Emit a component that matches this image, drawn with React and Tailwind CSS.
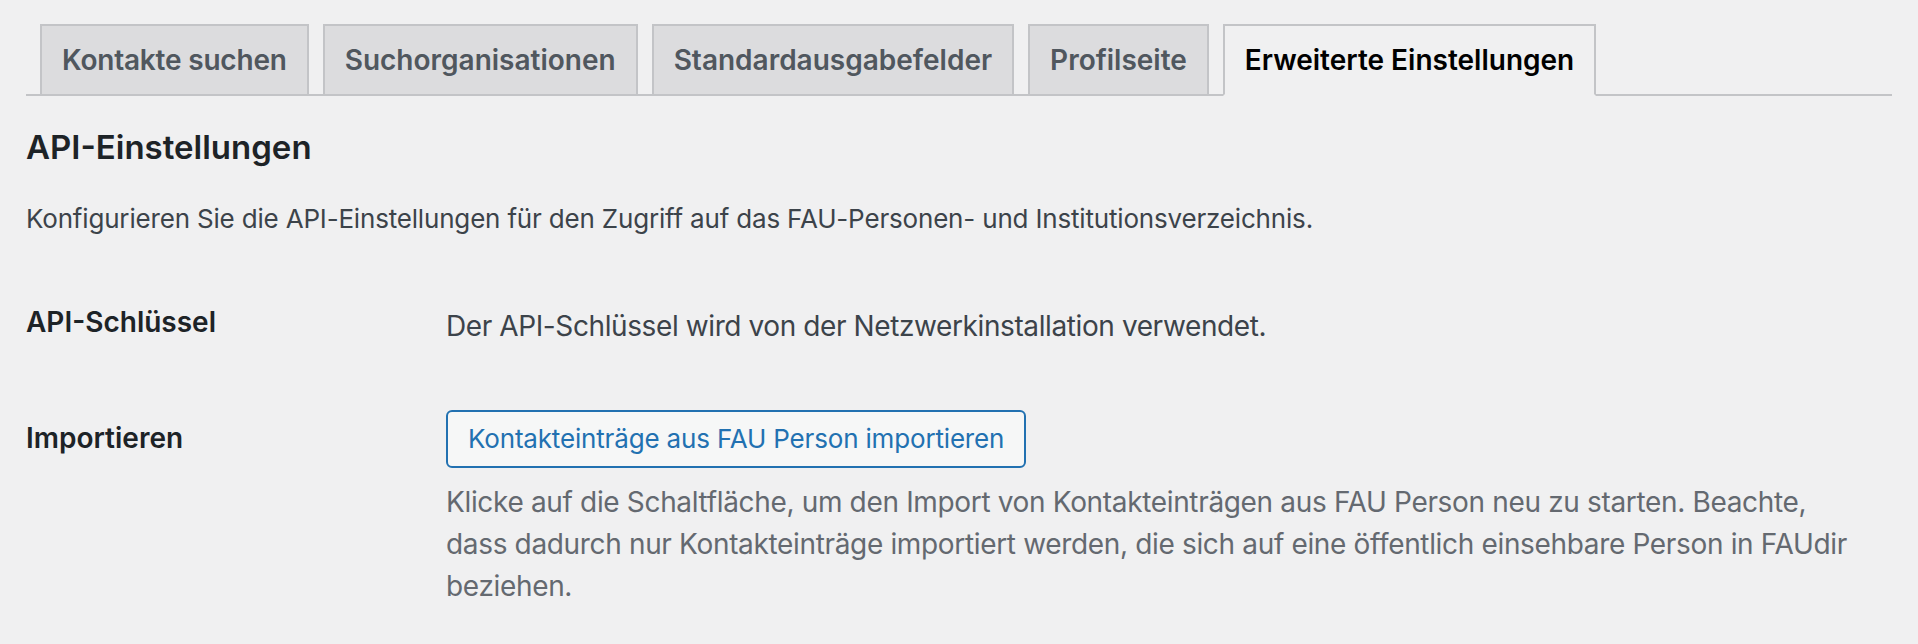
import React from "react";

const tabs = [
  "Kontakte suchen",
  "Suchorganisationen",
  "Standardausgabefelder",
  "Profilseite",
  "Erweiterte Einstellungen",
];

export default function App() {
  return (
    <div
      className="min-h-[644px] w-full bg-[#f0f0f1] pl-[26px] pr-[26px] pt-[24px]"
      style={{ fontFamily: "Inter, 'Noto Sans', sans-serif" }}
    >
      <nav className="flex items-end border-b-2 border-[#c3c4c7]">
        {tabs.map((t, i) => {
          const active = i === tabs.length - 1;
          const first = i === 0;
          return (
            <a
              key={t}
              className={
                "ml-[14px] -mb-[2px] block whitespace-nowrap border-2 px-[20px] py-[10px] text-[28px] font-semibold leading-[48px] " +
                (first ? "tracking-[-0.2px] " : "") +
                (active
                  ? "border-[#c3c4c7] border-b-[#f0f0f1] bg-[#f0f0f1] text-black"
                  : "border-[#c3c4c7] bg-[#dcdcde] text-[#50575e]")
              }
            >
              {t}
            </a>
          );
        })}
      </nav>

      <h2 className="mt-[29px] text-[33px] font-semibold leading-[44px] text-[#1d2327]">
        API-Einstellungen
      </h2>

      <p className="mt-[30px] text-[26px] leading-[39px] tracking-[-0.18px] text-[#3c434a]">
        Konfigurieren Sie die API-Einstellungen für den Zugriff auf das FAU-Personen- und Institutionsverzeichnis.
      </p>

      <div className="mt-[66px] flex">
        <div className="w-[420px] shrink-0 text-[28px] font-semibold leading-[36px] text-[#1d2327]">
          API-Schlüssel
        </div>
        <div className="mt-[1px] text-[28px] leading-[42px] tracking-[-0.4px] text-[#3c434a]">
          Der API-Schlüssel wird von der Netzwerkinstallation verwendet.
        </div>
      </div>

      <div className="mt-[63px] flex">
        <div className="mt-[10px] w-[420px] shrink-0 text-[28px] font-semibold leading-[36px] text-[#1d2327]">
          Importieren
        </div>
        <div className="flex flex-col items-start">
          <button className="h-[58px] rounded-[6px] border-2 border-[#2271b1] bg-[#f6f7f7] px-[20px] text-[26px] leading-[54px] tracking-[-0.17px] text-[#2271b1]">
            Kontakteinträge aus FAU Person importieren
          </button>
          <p className="mt-[13px] text-[28px] leading-[42px] tracking-[-0.34px] text-[#646970]">
            Klicke auf die Schaltfläche, um den Import von Kontakteinträgen aus FAU Person neu zu starten. Beachte,
            <br />
            dass dadurch nur Kontakteinträge importiert werden, die sich auf eine öffentlich einsehbare Person in FAUdir
            <br />
            beziehen.
          </p>
        </div>
      </div>
    </div>
  );
}
